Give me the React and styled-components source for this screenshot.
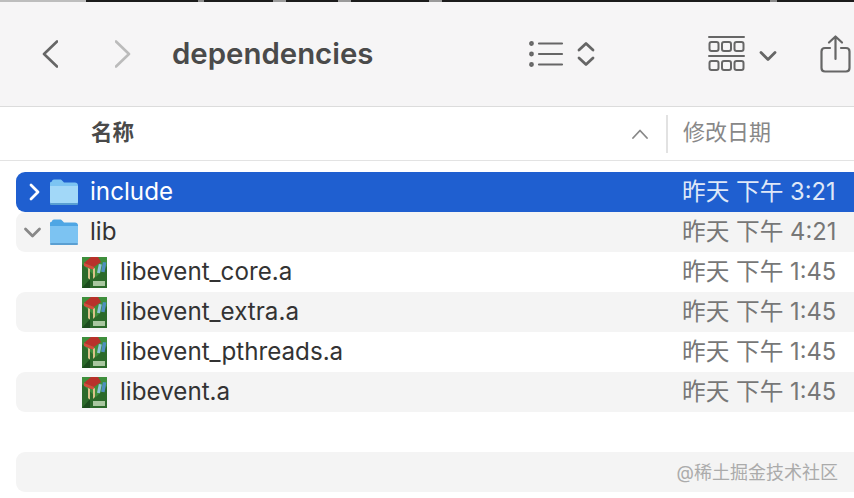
import React from "react";
import styled, { createGlobalStyle } from "styled-components";

const GlobalStyle = createGlobalStyle`
  html, body { margin: 0; padding: 0; background: #fff; overflow: hidden; }
  body { font-family: Inter, "Noto Sans CJK SC", sans-serif; }
`;

const Window = styled.div`
  width: 854px;
  height: 498px;
  overflow: hidden;
  background: #fff;
`;

const TopStrip = styled.div`
  height: 2px;
  background: linear-gradient(
    90deg,
    #bdbdbd 0 86px,
    #1c1c1c 86px 198px,
    #8a8a8a 198px 204px,
    #1c1c1c 204px 273px,
    #9a9a9a 273px 286px,
    #1c1c1c 286px 338px,
    #9a9a9a 338px 351px,
    #1c1c1c 351px 429px,
    #9a9a9a 429px 442px,
    #1c1c1c 442px 770px,
    #8a8a8a 770px 777px,
    #1c1c1c 777px
  );
`;

const Toolbar = styled.div`
  height: 105px;
  box-sizing: border-box;
  padding-left: 42px;
  display: flex;
  align-items: center;
  background: #f6f5f6;
  border-bottom: 1px solid #dcdcdc;
`;

const NavButton = styled.svg`
  flex: none;
  width: 16px;
  height: 28px;
  margin-left: ${(p) => p.$gap || 0}px;
  fill: none;
  stroke: ${(p) => (p.$disabled ? "#bbbbbb" : "#666666")};
  stroke-width: 2.6;
  stroke-linecap: round;
  stroke-linejoin: round;
`;

const Title = styled.h1`
  flex: none;
  width: 201px;
  margin: 0 0 0 41px;
  padding-bottom: 2px;
  font-size: 29.4px;
  font-weight: 600;
  color: #4a4a4a;
  white-space: nowrap;
`;

const ToolIcon = styled.svg`
  flex: none;
  margin-left: ${(p) => p.$gap}px;
  fill: none;
  stroke: #666666;
  stroke-linecap: round;
  stroke-linejoin: round;
`;

const Header = styled.div`
  height: 54px;
  box-sizing: border-box;
  display: flex;
  align-items: center;
  border-bottom: 1px solid #e3e3e3;
  margin-bottom: 11px;
`;

const NameHeader = styled.div`
  flex: none;
  width: 541px;
  margin-left: 91px;
  padding-bottom: 6px;
  font-size: 21.5px;
  font-weight: 700;
  color: #4a4a4a;
`;

const SortCaret = styled.svg`
  flex: none;
  width: 16px;
  height: 10px;
  margin-right: 18px;
  fill: none;
  stroke: #888888;
  stroke-width: 1.8;
  stroke-linecap: round;
  stroke-linejoin: round;
`;

const Divider = styled.div`
  flex: none;
  width: 2px;
  height: 38px;
  background: #e2e2e2;
  margin-right: 15px;
`;

const DateHeader = styled.div`
  padding-bottom: 8px;
  font-size: 22px;
  color: #888888;
  white-space: nowrap;
`;

const Row = styled.div`
  height: 40px;
  box-sizing: border-box;
  margin: 0 -12px 0 16px;
  border-radius: 9px;
  display: flex;
  align-items: center;
  padding-left: ${(p) => (p.$child ? 66 : 9)}px;
  background: ${(p) =>
    p.$selected ? "#1f5fd0" : p.$alt ? "#f4f4f4" : "transparent"};
  color: ${(p) => (p.$selected ? "#ffffff" : "#333333")};
  font-size: 24.2px;
`;

const Disclosure = styled.svg`
  flex: none;
  width: 18px;
  height: 18px;
  margin-right: 7px;
  overflow: visible;
  fill: none;
  stroke: ${(p) => (p.$selected ? "#ffffff" : "#888888")};
  stroke-width: 2.8;
  stroke-linecap: round;
  stroke-linejoin: round;
`;

const FolderSvg = styled.svg`
  flex: none;
  width: 28px;
  height: 26px;
  margin-right: 12px;
`;

const ArchiveSvg = styled.svg`
  flex: none;
  width: 25px;
  height: 31px;
  margin-right: 13px;
`;

const Name = styled.div`
  flex: 1;
  min-width: 0;
  padding-bottom: 2px;
  white-space: nowrap;
`;

const DateCell = styled.div`
  flex: none;
  width: 184px;
  padding-bottom: 5px;
  font-size: 23.7px;
  color: ${(p) => (p.$selected ? "#dfe8f8" : "#777777")};
  white-space: nowrap;
`;

const Watermark = styled.div`
  margin-left: auto;
  margin-right: 28px;
  padding-bottom: 2px;
  font-size: 18px;
  color: #ababab;
  white-space: nowrap;
`;

const FolderIcon = ({ selected }) => (
  <FolderSvg viewBox="0 0 28 26">
    <path
      d="M2 2.5C2 1.4 2.9.5 4 .5h6c1 0 1.600.4 2.300 1.200L14 3.500h11c1.600 0 3 1.200 3 2.800V8H0V4c0-.6.9-1.500 2-1.500z"
      fill={selected ? "#7cc4f2" : "#4ea6e4"}
    />
    <path
      d="M0 7h28v16c0 1.600-1.300 3-3 3H3c-1.700 0-3-1.400-3-3V7z"
      fill={selected ? "#a2d8f8" : "#7cc3f2"}
    />
    <rect y="24" width="28" height="2" rx="1" fill="#5a9fd2" />
  </FolderSvg>
);

const ArchiveIcon = () => (
  <ArchiveSvg viewBox="0 0 25 31">
    <rect width="25" height="31" fill="#2c6a2b" />
    <path d="M0 0h25v9L14 20 0 7z" fill="#3f8f3c" />
    <path d="M2 6 9 0h7l3 5-7 5z" fill="#b8312b" />
    <path d="M2 6l10 4v3L2 9z" fill="#d8493c" />
    <path d="M6 11l2 1v11l-2-2zM11 12l2-1v9l-2 2z" fill="#d9c28a" />
    <rect x="16" y="7" width="3" height="9" fill="#8fc4d8" transform="rotate(12 17 11)" />
    <rect x="20" y="5" width="3.500" height="10" fill="#4f8fc0" transform="rotate(10 21 10)" />
    <rect x="11" y="24" width="12" height="5" fill="#a9c7a0" />
    <path d="M0 31l8-9v9z" fill="#1c4d1e" />
  </ArchiveSvg>
);

const files = [
  { name: "libevent_core.a", alt: false },
  { name: "libevent_extra.a", alt: true },
  { name: "libevent_pthreads.a", alt: false },
  { name: "libevent.a", alt: true },
];

export default function App() {
  return (
    <Window>
      <GlobalStyle />
      <TopStrip />
      <Toolbar>
        <NavButton viewBox="0 0 16 28">
          <path d="M15 1.500 2 14l13 12.500" />
        </NavButton>
        <NavButton viewBox="0 0 16 28" $gap={57} $disabled>
          <path d="M1 1.500 14 14 1 26.500" />
        </NavButton>
        <Title>dependencies</Title>

        <ToolIcon $gap={156} width="66" height="26" viewBox="0 0 66 26" strokeWidth="2.2">
          <circle cx="2.5" cy="2.5" r="1.3" />
          <circle cx="2.5" cy="13" r="1.3" />
          <circle cx="2.5" cy="23.5" r="1.3" />
          <path d="M10 2.500h23M10 13h23M10 23.500h23" />
          <path strokeWidth="2.8" d="M50 9 57 2.500 64 9M50 17l7 6.500 7-6.500" />
        </ToolIcon>

        <ToolIcon $gap={113} width="69" height="36" viewBox="0 0 69 36" strokeWidth="2">
          <path d="M1 1h35M1 20h35" />
          <rect x="1.5" y="6" width="9" height="9" rx="2" />
          <rect x="14" y="6" width="9" height="9" rx="2" />
          <rect x="26.5" y="6" width="9" height="9" rx="2" />
          <rect x="1.5" y="25" width="9" height="9" rx="2" />
          <rect x="14" y="25" width="9" height="9" rx="2" />
          <rect x="26.5" y="25" width="9" height="9" rx="2" />
          <path strokeWidth="2.8" d="M53 16.500l7 7 7-7" />
        </ToolIcon>

        <ToolIcon $gap={43} width="31" height="38" viewBox="0 0 31 38" strokeWidth="2.2">
          <path d="M10 13H5c-2 0-3.500 1.500-3.500 3.500V33c0 2 1.500 3.500 3.500 3.500h21c2 0 3.500-1.500 3.500-3.500V16.500c0-2-1.500-3.500-3.500-3.500h-5" />
          <path d="M15.500 24V1.500M9 7.500l6.500-6 6.500 6" />
        </ToolIcon>
      </Toolbar>

      <Header>
        <NameHeader>名称</NameHeader>
        <SortCaret viewBox="0 0 16 10">
          <path d="M1 9l7-7.500L15 9" />
        </SortCaret>
        <Divider />
        <DateHeader>修改日期</DateHeader>
      </Header>

      <Row $selected>
        <Disclosure viewBox="0 0 18 18" $selected>
          <path d="M6 2l7 7-7 7" />
        </Disclosure>
        <FolderIcon selected />
        <Name>include</Name>
        <DateCell $selected>昨天 下午 3:21</DateCell>
      </Row>
      <Row $alt>
        <Disclosure viewBox="0 0 18 18">
          <path d="M0.5 6 7.500 13l7-7" />
        </Disclosure>
        <FolderIcon />
        <Name>lib</Name>
        <DateCell>昨天 下午 4:21</DateCell>
      </Row>
      {files.map((f) => (
        <Row key={f.name} $child $alt={f.alt}>
          <ArchiveIcon />
          <Name>{f.name}</Name>
          <DateCell>昨天 下午 1:45</DateCell>
        </Row>
      ))}
      <Row />
      <Row $alt>
        <Watermark>@稀土掘金技术社区</Watermark>
      </Row>
    </Window>
  );
}
